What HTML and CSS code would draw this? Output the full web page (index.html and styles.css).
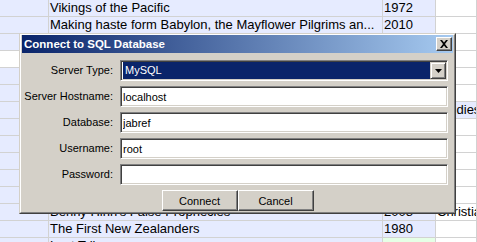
FILE: index.html
```html
<!DOCTYPE html>
<html lang="en">
<head>
    <meta charset="UTF-8">
    <title>Connect to SQL Database</title>
    <link rel="stylesheet" href="styles.css">
</head>
<body>

    <div class="table">
        <div class="row">
            <div class="cell req"></div>
            <div class="cell req">Vikings of the Pacific</div>
            <div class="cell req">1972</div>
            <div class="cell"></div>
        </div>
        <div class="row">
            <div class="cell req"></div>
            <div class="cell req">Making haste form Babylon, the Mayflower Pilgrims an...</div>
            <div class="cell req">2010</div>
            <div class="cell"></div>
        </div>
        <div class="row">
            <div class="cell req"></div><div class="cell"></div><div class="cell"></div><div class="cell"></div>
        </div>
        <div class="row">
            <div class="cell"></div><div class="cell"></div><div class="cell"></div><div class="cell"></div>
        </div>
        <div class="row">
            <div class="cell req"></div><div class="cell"></div><div class="cell"></div><div class="cell"></div>
        </div>
        <div class="row">
            <div class="cell req"></div><div class="cell"></div><div class="cell"></div><div class="cell"></div>
        </div>
        <div class="row">
            <div class="cell req"></div><div class="cell"></div><div class="cell"></div><div class="cell req">Studies</div>
        </div>
        <div class="row">
            <div class="cell req"></div><div class="cell"></div><div class="cell"></div><div class="cell"></div>
        </div>
        <div class="row">
            <div class="cell req"></div><div class="cell"></div><div class="cell"></div><div class="cell"></div>
        </div>
        <div class="row">
            <div class="cell req"></div><div class="cell"></div><div class="cell"></div><div class="cell"></div>
        </div>
        <div class="row">
            <div class="cell req"></div><div class="cell"></div><div class="cell"></div><div class="cell"></div>
        </div>
        <div class="row">
            <div class="cell req"></div><div class="cell"></div><div class="cell"></div><div class="cell"></div>
        </div>
        <div class="row">
            <div class="cell req"></div>
            <div class="cell req">Benny Hinn's False Prophecies</div>
            <div class="cell req">2008</div>
            <div class="cell">Christian</div>
        </div>
        <div class="row">
            <div class="cell req"></div>
            <div class="cell req">The First New Zealanders</div>
            <div class="cell req">1980</div>
            <div class="cell"></div>
        </div>
        <div class="row">
            <div class="cell req"></div>
            <div class="cell req">Lost Tribes</div>
            <div class="cell opt"></div>
            <div class="cell"></div>
        </div>
    </div>

    <!-- dialog floats over the table -->
    <div class="dialog">
        <div class="frame">
            <div class="titlebar">
                <span class="title">Connect to SQL Database</span>
                <div class="close-btn">
                    <svg width="16" height="14" viewBox="0 0 16 14">
                        <path d="M4 3h2l2 2.5L10 3h2L9 7l3 4h-2L8 8.5 6 11H4l3-4z" fill="#000"/>
                    </svg>
                </div>
            </div>

            <div class="form">
                <label>Server Type:</label>
                <div class="combo">
                    <div class="combo-value">MySQL</div>
                    <div class="combo-arrow">
                        <svg width="7" height="4" viewBox="0 0 7 4"><path d="M0 0h7L3.5 4z" fill="#000"/></svg>
                    </div>
                </div>

                <label>Server Hostname:</label>
                <input class="field" type="text" value="localhost">

                <label>Database:</label>
                <input class="field" type="text" value="jabref">

                <label>Username:</label>
                <input class="field" type="text" value="root">

                <label>Password:</label>
                <input class="field" type="password" value="">
            </div>

            <div class="buttons">
                <button class="btn">Connect</button>
                <button class="btn">Cancel</button>
            </div>
        </div>
    </div>

</body>
</html>
```

FILE: styles.css
```css
* {
    margin: 0;
    padding: 0;
    box-sizing: border-box;
}

body {
    font-family: 'Liberation Sans', Arial, sans-serif;
    background-color: #fff;
    color: #000;
    height: 242px;
    overflow: hidden;
    position: relative;
}

/* background table */
.table {
    font-size: 13px;
    line-height: 16px;
    height: 242px;
    overflow: hidden;
}

.row {
    display: grid;
    grid-template-columns: 49px 334px 53px 1fr;
}

.cell {
    height: 17px;
    padding-left: 1px;
    border-right: 1px solid #d2d2d2;
    border-bottom: 1px solid #d2d2d2;
    white-space: nowrap;
    overflow: hidden;
}

.cell.req {
    background-color: #e6ebff;
}

.cell.opt {
    background-color: #e6ffe6;
}

/* dialog */
.dialog {
    position: absolute;
    left: 19px;
    top: 33px;
    width: 437px;
    height: 181px;
    background-color: #d4d0c8;
    border: 1px solid;
    border-color: #d4d0c8 #404040 #404040 #d4d0c8;
    font-size: 11px;
}

.frame {
    height: 100%;
    display: flex;
    flex-direction: column;
    border: 1px solid;
    border-color: #fff #808080 #808080 #fff;
    padding: 0 1px 1px;
}

.titlebar {
    height: 18px;
    display: flex;
    align-items: center;
    padding-left: 2px;
    background: linear-gradient(to right, #0a246a, #a6caf0);
}

.title {
    color: #fff;
    font-weight: bold;
    font-size: 11.5px;
    line-height: 18px;
}

.close-btn {
    margin-left: auto;
    margin-right: 1px;
    width: 16px;
    height: 14px;
    background-color: #d4d0c8;
    border: 1px solid;
    border-color: #fff #404040 #404040 #fff;
    box-shadow: inset -1px -1px 0 #808080;
    display: flex;
}

.close-btn svg {
    margin: -1px;
}

.form {
    display: grid;
    grid-template-columns: 91px 328px;
    column-gap: 7px;
    row-gap: 5px;
    padding-top: 7px;
}

.form label {
    text-align: right;
    line-height: 21px;
    height: 21px;
}

.field,
.combo {
    height: 21px;
    border: 1px solid;
    border-color: #808080 #fff #fff #808080;
    box-shadow: inset 1px 1px 0 #404040, inset -1px -1px 0 #d4d0c8;
    background-color: #fff;
}

.field {
    font-family: 'Liberation Sans', Arial, sans-serif;
    font-size: 11px;
    color: #000;
    padding: 0 2px;
    outline: none;
}

.combo {
    display: flex;
    padding: 1px;
}

.combo-value {
    flex: 1;
    background-color: #0a246a;
    color: #fff;
    padding-left: 2px;
    line-height: 17px;
    border-left: 1px solid #fff;
}

.combo-arrow {
    width: 16px;
    height: 17px;
    background-color: #d4d0c8;
    border: 1px solid;
    border-color: #d4d0c8 #404040 #404040 #d4d0c8;
    box-shadow: inset 1px 1px 0 #fff, inset -1px -1px 0 #808080;
    display: flex;
    align-items: center;
    justify-content: center;
}

.buttons {
    display: flex;
    justify-content: center;
    margin-top: 5px;
}

.btn {
    width: 76px;
    height: 21px;
    font-family: 'Liberation Sans', Arial, sans-serif;
    font-size: 11px;
    color: #000;
    background-color: #d4d0c8;
    border: 1px solid;
    border-color: #fff #404040 #404040 #fff;
    box-shadow: inset -1px -1px 0 #808080;
}
```
